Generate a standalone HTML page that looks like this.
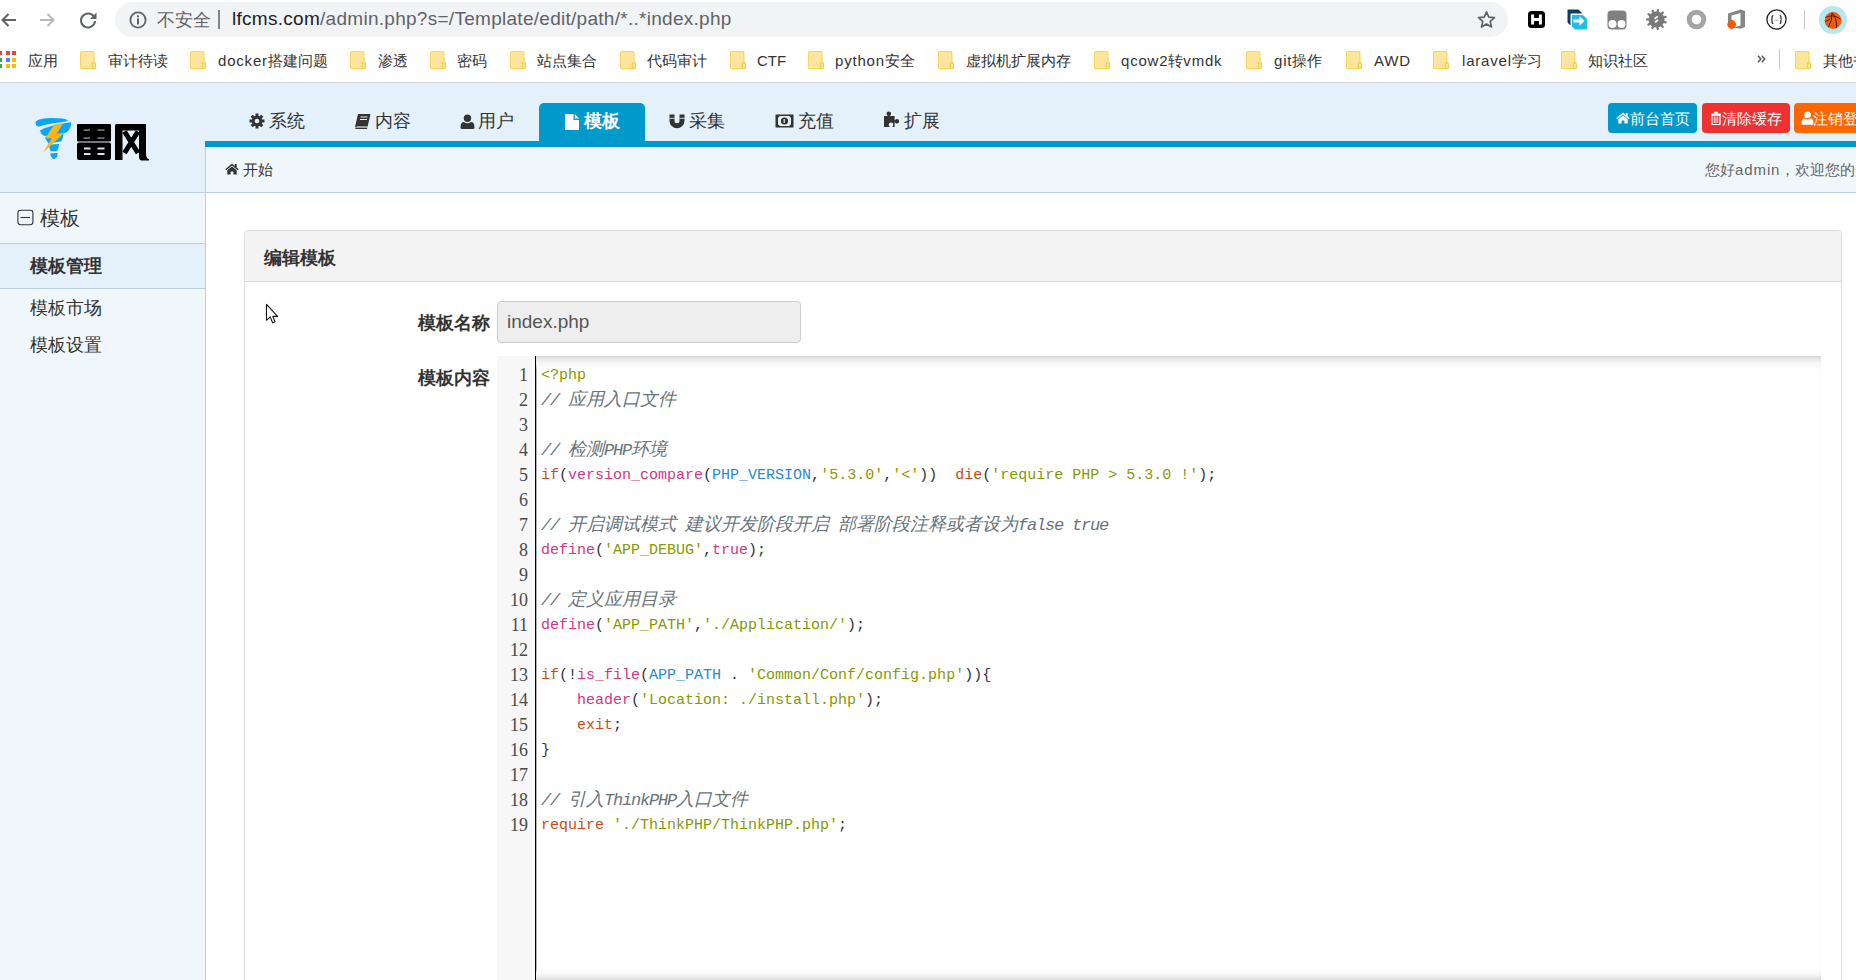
<!DOCTYPE html>
<html><head><meta charset="utf-8">
<style>
*{box-sizing:border-box;margin:0;padding:0}
html,body{width:1856px;height:980px;overflow:hidden;background:#fff;font-family:"Liberation Sans",sans-serif;color:#333}
div,span{position:absolute}
.t{white-space:nowrap}
#omni{left:115px;top:2px;width:1393px;height:35px;border-radius:17.5px;background:#f1f3f4}
#bmline{left:0;top:82px;width:1856px;height:1px;background:#d4d6d9}
.la{position:static;letter-spacing:.8px}
.bmi{top:53px;font-size:15px;color:#333;white-space:nowrap;line-height:16px}
.fold{top:51px;width:15px;height:19px;background:#fde293;border:1px solid #f6d061;border-radius:2px}
#logo{left:0;top:83px;width:205px;height:110px;background:#e4f0fa}
#hdr{left:205px;top:83px;width:1651px;height:58px;background:#e4f0fa}
#blue{left:205px;top:141px;width:1651px;height:6px;background:#0099cc}
#crumb{left:205px;top:147px;width:1651px;height:46px;background:#f0f7fb;border-bottom:1px solid #b9d0dd;border-left:1px solid #b9d0dd}
#logoline{left:0;top:192px;width:205px;height:1px;background:#b9d0dd}
.nav{top:103px;height:38px;font-size:18px;line-height:38px;color:#333;white-space:nowrap}
.navt{position:absolute;top:111px;font-size:18px;line-height:20px;color:#333;white-space:nowrap}
.btnt{position:absolute;top:110px;font-size:15px;line-height:17px;color:#fff;white-space:nowrap}
.act{background:#0099cc;color:#fff;font-weight:bold;border-radius:5px 5px 0 0}
.btn{top:103px;height:30px;line-height:30px;border-radius:4px;color:#fff;font-size:15px;white-space:nowrap}
#side{left:0;top:193px;width:206px;height:787px;background:#f0f7fb;border-right:1px solid #b9d0dd}
#panel{left:244px;top:230px;width:1598px;height:800px;border:1px solid #ddd;border-radius:4px;background:#fff}
#phead{left:0;top:0;width:1596px;height:51px;background:#f4f4f4;border-bottom:1px solid #ddd;border-radius:4px 4px 0 0}
.lbl{font-size:18px;font-weight:bold;color:#333;white-space:nowrap}
#inp{left:497px;top:301px;width:304px;height:42px;background:#eee;border:1px solid #ccc;border-radius:4px;font-size:19px;color:#555;padding-left:9px;line-height:40px}
#ed{left:497px;top:356px;width:1324px;height:624px;background:#fff;overflow:hidden}
#gut{left:0;top:0;width:37px;height:624px;background:#f7f7f7}
#cur{left:38px;top:0;width:1px;height:624px;background:#000;box-shadow:1px 0 0 rgba(0,0,0,.3)}
#shadowt{left:39px;top:0;width:1285px;height:14px;background:linear-gradient(#d6d6d6 0,#e9e9e9 3px,#f6f6f6 7px,rgba(255,255,255,0) 14px)}
#shadowr{left:1322px;top:0;width:2px;height:624px;background:linear-gradient(90deg,rgba(0,0,0,0),rgba(0,0,0,.025))}
#shadowb{left:39px;top:612px;width:1285px;height:12px;background:linear-gradient(rgba(255,255,255,0) 0,#f7f7f7 6px,#ececec 9px,#dedede 12px)}
.ln{left:0;width:31px;text-align:right;font-family:"Liberation Serif",serif;font-size:18px;color:#4a4a4a;line-height:25px}
.code{left:44px;font-family:"Liberation Mono",monospace;font-size:15px;white-space:pre;color:#333;line-height:25px}
.code i{font-style:normal}.code b{font-weight:normal}
.code i.cm{color:#687378;font-style:italic}
.k{color:#cb4b16}
.f{color:#d33682}
.s{color:#859900}
.c{color:#268bd2}
.p{color:#333}
.ca{font-size:17px;letter-spacing:-1.2px}
.cj{font-size:18px;font-weight:300 !important}
</style></head><body>
<!-- chrome toolbar -->
<svg style="position:absolute;left:0;top:11px" width="18" height="18" viewBox="0 0 18 18"><path d="M16 9H2.5M8.5 3L2.5 9l6 6" fill="none" stroke="#5f6368" stroke-width="2"/></svg>
<svg style="position:absolute;left:39px;top:11px" width="18" height="18" viewBox="0 0 18 18"><path d="M1 9h13.5M8.5 3l6 6-6 6" fill="none" stroke="#b5b8bb" stroke-width="2"/></svg>
<svg style="position:absolute;left:79px;top:11px" width="19" height="19" viewBox="0 0 19 19"><path d="M15.2 6.2A7 7 0 1 0 16 10" fill="none" stroke="#5f6368" stroke-width="2"/><path d="M17.5 1.5v6.5h-6.5z" fill="#5f6368"/></svg>
<div id="omni"></div>
<svg style="position:absolute;left:129px;top:11px" width="18" height="18" viewBox="0 0 18 18"><circle cx="9" cy="9" r="7.6" fill="none" stroke="#5f6368" stroke-width="1.8"/><rect x="8" y="7.5" width="2" height="6" fill="#5f6368"/><rect x="8" y="4.3" width="2" height="2" fill="#5f6368"/></svg>
<svg style="position:absolute;left:1477px;top:10px" width="19" height="19" viewBox="0 0 19 19"><path d="M9.5 1.8l2.3 5.3 5.7.5-4.3 3.8 1.3 5.6-5-3-5 3 1.3-5.6-4.3-3.8 5.7-.5z" fill="none" stroke="#5f6368" stroke-width="1.7" stroke-linejoin="round"/></svg>
<svg style="position:absolute;left:1527px;top:10px" width="19" height="19" viewBox="0 0 19 19"><rect x="1" y="1" width="17" height="17" rx="3.5" fill="#000"/><path d="M5.6 4.5v10M13.4 4.5v10M5.6 9.5h7.8" stroke="#fff" stroke-width="3"/></svg>
<svg style="position:absolute;left:1567px;top:9px" width="21" height="21" viewBox="0 0 21 21"><path d="M0.5 0.5h11l4 4H3.5v12l-3-3z" fill="#0e3a66"/><path d="M5 6h11l4 4v10.5H8l-3-3z" fill="#1ec0e4"/><path d="M6.5 10.5h6v-3.2l5 4.7-5 4.7v-3.2h-6z" fill="#fff"/></svg>
<svg style="position:absolute;left:1607px;top:10px" width="20" height="20" viewBox="0 0 20 20"><rect x="0.5" y="0.5" width="19" height="19" rx="4" fill="#808080"/><circle cx="5.5" cy="14" r="4" fill="#fff"/><circle cx="14.5" cy="14" r="4" fill="#fff"/></svg>
<svg style="position:absolute;left:1646px;top:9px" width="21" height="21" viewBox="0 0 20 20"><circle cx="10" cy="10" r="7.6" fill="#7a7a7a"/><path d="M16.2 11.9L18.6 12.7M14.2 15.0L15.8 16.9M10.8 16.4L11.2 18.9M7.2 15.9L6.1 18.1M4.5 13.4L2.4 14.8M3.5 9.9L1.0 9.9M4.6 6.4L2.5 5.0M7.4 4.0L6.4 1.8M11.0 3.6L11.4 1.1M14.3 5.1L16.0 3.3M16.3 8.3L18.7 7.6" stroke="#7a7a7a" stroke-width="2.2" stroke-linecap="round"/><path d="M8.2 9.3l3-2.3M8.6 12.6l3-2.3" stroke="#fff" stroke-width="1.6"/></svg>
<svg style="position:absolute;left:1686px;top:9px" width="21" height="21" viewBox="0 0 21 21"><circle cx="10.5" cy="10.5" r="7.3" fill="none" stroke="#a5a5a5" stroke-width="5"/></svg>
<svg style="position:absolute;left:1725px;top:8px" width="22" height="22" viewBox="0 0 22 22"><path d="M3 5.5L15.5 1.5 20 3v16l-4.5 1.8L8.5 19.5 15.5 17.5V5L6.5 7.5v8H3z" fill="#858585"/><circle cx="6.7" cy="16.5" r="4.4" fill="#f25a0a"/></svg>
<svg style="position:absolute;left:1766px;top:9px" width="21" height="21" viewBox="0 0 21 21"><circle cx="10.5" cy="10.5" r="9.6" fill="none" stroke="#222" stroke-width="1.3"/><path d="M7.3 6.5q-1.2 0-1.2 1.3v1.5q0 1.2-.9 1.2.9 0 .9 1.2v1.5q0 1.3 1.2 1.3M13.7 6.5q1.2 0 1.2 1.3v1.5q0 1.2.9 1.2-.9 0-.9 1.2v1.5q0 1.3-1.2 1.3" fill="none" stroke="#222" stroke-width="1.2"/><path d="M8.6 11.2h.8M10.1 11.2h.8M11.6 11.2h.8" stroke="#666" stroke-width="0.9"/></svg>
<div style="left:1804px;top:10px;width:1px;height:19px;background:#c8c8c8"></div>
<svg style="position:absolute;left:1819px;top:6px" width="28" height="28" viewBox="0 0 28 28"><circle cx="14" cy="14" r="14" fill="#b6e8f0"/><circle cx="14" cy="14.5" r="8.4" fill="#f25c12"/><path d="M6.5 11.5q7-4 15 1.5M9.5 21q4-7 3.5-14.5M13 7q5 4 4.5 15M6.3 15.5q3-1 5-3" fill="none" stroke="#3a1808" stroke-width="0.9"/></svg>
<div class="t" style="left:157px;top:10px;font-size:18px;color:#5f6368;line-height:20px">不安全</div>
<div style="left:218px;top:10px;width:2px;height:19px;background:#80868b"></div>
<div class="t" style="left:232px;top:9px;font-size:19px;letter-spacing:0.28px;color:#202124;line-height:20px">lfcms.com<span style="position:static;color:#5f6368">/admin.php?s=/Template/edit/path/*..*index.php</span></div>

<div id="bmline"></div>
<svg style="position:absolute;left:-2px;top:51px" width="20" height="18" viewBox="0 0 20 18"><g><rect x="0" y="0" width="4" height="4" fill="#ea4335"/><rect x="8" y="0" width="4" height="4" fill="#ea4335"/><rect x="14" y="0" width="4" height="4" fill="#ea4335"/><rect x="0" y="7" width="4" height="4" fill="#34a853"/><rect x="8" y="7" width="4" height="4" fill="#4285f4"/><rect x="14" y="7" width="4" height="4" fill="#fbbc05"/><rect x="0" y="13" width="4" height="4" fill="#34a853"/><rect x="8" y="13" width="4" height="4" fill="#fbbc05"/><rect x="14" y="13" width="4" height="4" fill="#fbbc05"/></g></svg>
<div class="bmi" style="left:28px">应用</div>
<svg style="position:absolute;left:80px;top:51px" width="17" height="19" viewBox="0 0 17 19"><rect x="0.6" y="0.6" width="13.3" height="17" rx="1.3" fill="#fde59c" stroke="#f8d558" stroke-width="1.2"/><rect x="2" y="2" width="10.5" height="14.2" fill="none" stroke="#fdea9f" stroke-width="1"/><rect x="12.3" y="11.6" width="3.1" height="6" rx="1.2" fill="#fde59c" stroke="#efcb4a" stroke-width="1.1"/></svg>
<div class="bmi" style="left:108px">审计待读</div>
<svg style="position:absolute;left:190px;top:51px" width="17" height="19" viewBox="0 0 17 19"><rect x="0.6" y="0.6" width="13.3" height="17" rx="1.3" fill="#fde59c" stroke="#f8d558" stroke-width="1.2"/><rect x="2" y="2" width="10.5" height="14.2" fill="none" stroke="#fdea9f" stroke-width="1"/><rect x="12.3" y="11.6" width="3.1" height="6" rx="1.2" fill="#fde59c" stroke="#efcb4a" stroke-width="1.1"/></svg>
<div class="bmi" style="left:218px"><span class="la">docker</span>搭建问题</div>
<svg style="position:absolute;left:350px;top:51px" width="17" height="19" viewBox="0 0 17 19"><rect x="0.6" y="0.6" width="13.3" height="17" rx="1.3" fill="#fde59c" stroke="#f8d558" stroke-width="1.2"/><rect x="2" y="2" width="10.5" height="14.2" fill="none" stroke="#fdea9f" stroke-width="1"/><rect x="12.3" y="11.6" width="3.1" height="6" rx="1.2" fill="#fde59c" stroke="#efcb4a" stroke-width="1.1"/></svg>
<div class="bmi" style="left:378px">渗透</div>
<svg style="position:absolute;left:430px;top:51px" width="17" height="19" viewBox="0 0 17 19"><rect x="0.6" y="0.6" width="13.3" height="17" rx="1.3" fill="#fde59c" stroke="#f8d558" stroke-width="1.2"/><rect x="2" y="2" width="10.5" height="14.2" fill="none" stroke="#fdea9f" stroke-width="1"/><rect x="12.3" y="11.6" width="3.1" height="6" rx="1.2" fill="#fde59c" stroke="#efcb4a" stroke-width="1.1"/></svg>
<div class="bmi" style="left:457px">密码</div>
<svg style="position:absolute;left:510px;top:51px" width="17" height="19" viewBox="0 0 17 19"><rect x="0.6" y="0.6" width="13.3" height="17" rx="1.3" fill="#fde59c" stroke="#f8d558" stroke-width="1.2"/><rect x="2" y="2" width="10.5" height="14.2" fill="none" stroke="#fdea9f" stroke-width="1"/><rect x="12.3" y="11.6" width="3.1" height="6" rx="1.2" fill="#fde59c" stroke="#efcb4a" stroke-width="1.1"/></svg>
<div class="bmi" style="left:537px">站点集合</div>
<svg style="position:absolute;left:620px;top:51px" width="17" height="19" viewBox="0 0 17 19"><rect x="0.6" y="0.6" width="13.3" height="17" rx="1.3" fill="#fde59c" stroke="#f8d558" stroke-width="1.2"/><rect x="2" y="2" width="10.5" height="14.2" fill="none" stroke="#fdea9f" stroke-width="1"/><rect x="12.3" y="11.6" width="3.1" height="6" rx="1.2" fill="#fde59c" stroke="#efcb4a" stroke-width="1.1"/></svg>
<div class="bmi" style="left:647px">代码审计</div>
<svg style="position:absolute;left:730px;top:51px" width="17" height="19" viewBox="0 0 17 19"><rect x="0.6" y="0.6" width="13.3" height="17" rx="1.3" fill="#fde59c" stroke="#f8d558" stroke-width="1.2"/><rect x="2" y="2" width="10.5" height="14.2" fill="none" stroke="#fdea9f" stroke-width="1"/><rect x="12.3" y="11.6" width="3.1" height="6" rx="1.2" fill="#fde59c" stroke="#efcb4a" stroke-width="1.1"/></svg>
<div class="bmi" style="left:757px">CTF</div>
<svg style="position:absolute;left:808px;top:51px" width="17" height="19" viewBox="0 0 17 19"><rect x="0.6" y="0.6" width="13.3" height="17" rx="1.3" fill="#fde59c" stroke="#f8d558" stroke-width="1.2"/><rect x="2" y="2" width="10.5" height="14.2" fill="none" stroke="#fdea9f" stroke-width="1"/><rect x="12.3" y="11.6" width="3.1" height="6" rx="1.2" fill="#fde59c" stroke="#efcb4a" stroke-width="1.1"/></svg>
<div class="bmi" style="left:835px"><span class="la">python</span>安全</div>
<svg style="position:absolute;left:938px;top:51px" width="17" height="19" viewBox="0 0 17 19"><rect x="0.6" y="0.6" width="13.3" height="17" rx="1.3" fill="#fde59c" stroke="#f8d558" stroke-width="1.2"/><rect x="2" y="2" width="10.5" height="14.2" fill="none" stroke="#fdea9f" stroke-width="1"/><rect x="12.3" y="11.6" width="3.1" height="6" rx="1.2" fill="#fde59c" stroke="#efcb4a" stroke-width="1.1"/></svg>
<div class="bmi" style="left:966px">虚拟机扩展内存</div>
<svg style="position:absolute;left:1094px;top:51px" width="17" height="19" viewBox="0 0 17 19"><rect x="0.6" y="0.6" width="13.3" height="17" rx="1.3" fill="#fde59c" stroke="#f8d558" stroke-width="1.2"/><rect x="2" y="2" width="10.5" height="14.2" fill="none" stroke="#fdea9f" stroke-width="1"/><rect x="12.3" y="11.6" width="3.1" height="6" rx="1.2" fill="#fde59c" stroke="#efcb4a" stroke-width="1.1"/></svg>
<div class="bmi" style="left:1121px"><span class="la">qcow2</span>转<span class="la">vmdk</span></div>
<svg style="position:absolute;left:1246px;top:51px" width="17" height="19" viewBox="0 0 17 19"><rect x="0.6" y="0.6" width="13.3" height="17" rx="1.3" fill="#fde59c" stroke="#f8d558" stroke-width="1.2"/><rect x="2" y="2" width="10.5" height="14.2" fill="none" stroke="#fdea9f" stroke-width="1"/><rect x="12.3" y="11.6" width="3.1" height="6" rx="1.2" fill="#fde59c" stroke="#efcb4a" stroke-width="1.1"/></svg>
<div class="bmi" style="left:1274px"><span class="la">git</span>操作</div>
<svg style="position:absolute;left:1346px;top:51px" width="17" height="19" viewBox="0 0 17 19"><rect x="0.6" y="0.6" width="13.3" height="17" rx="1.3" fill="#fde59c" stroke="#f8d558" stroke-width="1.2"/><rect x="2" y="2" width="10.5" height="14.2" fill="none" stroke="#fdea9f" stroke-width="1"/><rect x="12.3" y="11.6" width="3.1" height="6" rx="1.2" fill="#fde59c" stroke="#efcb4a" stroke-width="1.1"/></svg>
<div class="bmi" style="left:1374px"><span class="la">AWD</span></div>
<svg style="position:absolute;left:1433px;top:51px" width="17" height="19" viewBox="0 0 17 19"><rect x="0.6" y="0.6" width="13.3" height="17" rx="1.3" fill="#fde59c" stroke="#f8d558" stroke-width="1.2"/><rect x="2" y="2" width="10.5" height="14.2" fill="none" stroke="#fdea9f" stroke-width="1"/><rect x="12.3" y="11.6" width="3.1" height="6" rx="1.2" fill="#fde59c" stroke="#efcb4a" stroke-width="1.1"/></svg>
<div class="bmi" style="left:1462px"><span class="la">laravel</span>学习</div>
<svg style="position:absolute;left:1561px;top:51px" width="17" height="19" viewBox="0 0 17 19"><rect x="0.6" y="0.6" width="13.3" height="17" rx="1.3" fill="#fde59c" stroke="#f8d558" stroke-width="1.2"/><rect x="2" y="2" width="10.5" height="14.2" fill="none" stroke="#fdea9f" stroke-width="1"/><rect x="12.3" y="11.6" width="3.1" height="6" rx="1.2" fill="#fde59c" stroke="#efcb4a" stroke-width="1.1"/></svg>
<div class="bmi" style="left:1588px">知识社区</div>
<svg style="position:absolute;left:1795px;top:51px" width="17" height="19" viewBox="0 0 17 19"><rect x="0.6" y="0.6" width="13.3" height="17" rx="1.3" fill="#fde59c" stroke="#f8d558" stroke-width="1.2"/><rect x="2" y="2" width="10.5" height="14.2" fill="none" stroke="#fdea9f" stroke-width="1"/><rect x="12.3" y="11.6" width="3.1" height="6" rx="1.2" fill="#fde59c" stroke="#efcb4a" stroke-width="1.1"/></svg>
<div class="bmi" style="left:1823px">其他书签</div>
<svg style="position:absolute;left:1757px;top:55px" width="9" height="8" viewBox="0 0 9 8"><path d="M1 0.8l2.8 3.2L1 7.2M4.8 0.8l2.8 3.2-2.8 3.2" fill="none" stroke="#5a5e63" stroke-width="1.6"/></svg>
<div style="left:1779px;top:49px;width:1px;height:20px;background:#c8c8cc"></div>

<!-- page header -->
<div id="logo"></div>
<svg style="position:absolute;left:30px;top:112px" width="50" height="53" viewBox="0 0 50 53">
<g fill="#0ba7f7">
<path d="M5.5 11Q5.5 6.5 21 6Q35.5 6 37.8 8.3Q37 9.8 30 10.5Q17 12 8 14.8Q5.6 13.8 5.5 11Z"/>
<path d="M10 18.5Q19 13 40.8 10.3Q41.5 11 40.5 15Q39 19.5 35 21Q29 22 24 23L14.5 24Q11 22.5 10 18.5Z"/>
<path d="M15 25Q22 22.5 33.6 21.5Q33.5 26 31 29.5Q25 30.5 18.5 31.5Q16 28.5 15 25Z"/>
<path d="M19 33Q24 32 29 32Q29 36.5 27 39Q23 39.5 20.5 39Q19.3 36 19 33Z"/>
<path d="M20 41.5Q24 40.6 27.8 41Q27.8 45.5 24.5 47Q21.5 47.2 20 41.5Z"/>
</g>
<path d="M24.3 12.2H32.6L26.8 21.6H33.6L12.7 41L21.9 26.2H15.4Z" fill="#fcb314"/>
</svg>
<svg style="position:absolute;left:76px;top:123px" width="76" height="38" viewBox="0 0 76 38">
<g fill="#000">
<rect x="1" y="1" width="34" height="17.5" rx="1"/>
<rect x="1" y="19.5" width="34" height="17.5" rx="2"/>
<path d="M40 1h30v29q0 6 3 6v1.5H66q-3 0-3-4V7.5H46.5V37H39V4q0-3 1-3z"/>
<path d="M48.5 8.5L62 30M62 8.5L48.5 30" stroke="#000" stroke-width="5"/>
</g>
<g fill="#7a7a7a">
<rect x="7.5" y="6.3" width="6.5" height="1.6"/><rect x="21.5" y="6.3" width="7" height="1.6"/>
<rect x="7.5" y="14.3" width="6.5" height="1.6"/><rect x="21.5" y="14.3" width="7" height="1.6"/>
</g>
<g fill="#d8e4ee">
<rect x="8" y="24.5" width="6.5" height="2"/><rect x="21.5" y="24.5" width="7" height="2"/>
<rect x="8" y="30" width="6.5" height="2"/><rect x="21.5" y="30" width="7" height="2"/>
</g>
</svg>
<div id="logoline"></div>
<div id="hdr"></div>
<div class="nav act" style="left:539px;width:106px"></div>
<div class="navt" style="left:269px">系统</div>
<div class="navt" style="left:375px">内容</div>
<div class="navt" style="left:478px">用户</div>
<div class="navt" style="left:584px;color:#fff;font-weight:bold">模板</div>
<div class="navt" style="left:689px">采集</div>
<div class="navt" style="left:798px">充值</div>
<div class="navt" style="left:904px">扩展</div>
<svg style="position:absolute;left:249px;top:113px" width="16" height="16" viewBox="0 0 16 16"><g fill="#333"><circle cx="8" cy="8" r="5.2"/><g id="teeth"><rect x="6.5" y="0.5" width="3" height="3.5"/><rect x="6.5" y="12" width="3" height="3.5"/><rect x="0.5" y="6.5" width="3.5" height="3"/><rect x="12" y="6.5" width="3.5" height="3"/></g><g transform="rotate(45 8 8)"><rect x="6.5" y="0.5" width="3" height="3.5"/><rect x="6.5" y="12" width="3" height="3.5"/><rect x="0.5" y="6.5" width="3.5" height="3"/><rect x="12" y="6.5" width="3.5" height="3"/></g></g><circle cx="8" cy="8" r="2.3" fill="#e4f0fa"/></svg>
<svg style="position:absolute;left:354px;top:113px" width="17" height="17" viewBox="0 0 17 17"><path d="M4 1h12.5l-3 13H1z" fill="#333"/><path d="M1.3 14.5h12l-.3 1.5H1.5z" fill="#333"/><path d="M6.5 4h7M6 6.5h7" stroke="#e4f0fa" stroke-width="1.2"/><path d="M2.5 13.8h11" stroke="#e4f0fa" stroke-width="0.8"/></svg>
<svg style="position:absolute;left:460px;top:114px" width="15" height="15" viewBox="0 0 15 15"><circle cx="7.5" cy="4.2" r="3.7" fill="#333"/><path d="M0.5 13.5q0-5.5 3.5-5.5 3.5 2.5 7 0 3.5 0 3.5 5.5 0 1.5-1.5 1.5H2q-1.5 0-1.5-1.5z" fill="#333"/></svg>
<svg style="position:absolute;left:564px;top:113px" width="16" height="18" viewBox="0 0 16 18"><path d="M1 1h8.5v6H15v10H1z" fill="#fff"/><path d="M10.8 1L15 5.5h-4.2z" fill="#fff"/></svg>
<svg style="position:absolute;left:669px;top:113px" width="16" height="16" viewBox="0 0 16 16"><path d="M0.5 1.5h5v6.2a2.5 2.5 0 0 0 5 0V1.5h5v6.2a7.5 7.5 0 0 1-15 0z" fill="#333"/><path d="M0.5 5.3h5M10.5 5.3h5" stroke="#e4f0fa" stroke-width="0.9"/></svg>
<svg style="position:absolute;left:775px;top:114px" width="19" height="14" viewBox="0 0 19 14"><rect x="0.5" y="0.5" width="18" height="13" fill="#333"/><path d="M3 3.5q1.5 0 1.5-1.5h10q0 1.5 1.5 1.5v7q-1.5 0-1.5 1.5h-10q0-1.5-1.5-1.5z" fill="#e4f0fa"/><circle cx="9.5" cy="7" r="3.6" fill="#333"/><path d="M9.2 5v4" stroke="#e4f0fa" stroke-width="1.2"/></svg>
<svg style="position:absolute;left:883px;top:111px" width="18" height="17" viewBox="0 0 18 17"><path d="M1 5h4q-1.5-1-1.5-2.3a2.3 2.3 0 0 1 4.6 0q0 1.3-1.5 2.3h5v4.5q1-1.5 2.3-1.5a2.3 2.3 0 0 1 0 4.6q-1.3 0-2.3-1.5v4.9H9q1.3-1 1.3-2.2a2.3 2.3 0 0 0-4.6 0q0 1.2 1.3 2.2H1z" fill="#333"/></svg>
<div class="btn" style="left:1608px;width:89px;background:#0099cc"></div>
<div class="btn" style="left:1702px;width:88px;background:#ee3131"></div>
<div class="btn" style="left:1794px;width:80px;background:#ff6600"></div>
<div class="btnt" style="left:1630px">前台首页</div>
<div class="btnt" style="left:1722px">清除缓存</div>
<div class="btnt" style="left:1813px">注销登录</div>
<svg style="position:absolute;left:1616px;top:112px" width="14" height="12" viewBox="0 0 14 12"><path d="M7 0.5L0.3 6.2l1 1.1L7 2.6l5.7 4.7 1-1.1z" fill="#fff"/><path d="M2.3 7.2L7 3.4l4.7 3.8v4.3H8.4V8.4H5.6v3.1H2.3z" fill="#fff"/><rect x="9.8" y="1" width="1.9" height="3.2" fill="#fff"/></svg>
<svg style="position:absolute;left:1710px;top:111px" width="12" height="14" viewBox="0 0 12 14"><path d="M4 1.5h4M1 3.2h10" stroke="#fff" stroke-width="1.4"/><path d="M2 4.2h8v8.5a1 1 0 0 1-1 1H3a1 1 0 0 1-1-1z" fill="none" stroke="#fff" stroke-width="1.3"/><path d="M4.3 5.5v6.5M6 5.5v6.5M7.7 5.5v6.5" stroke="#fff" stroke-width="0.9"/></svg>
<svg style="position:absolute;left:1801px;top:111px" width="13" height="14" viewBox="0 0 13 14"><circle cx="6.5" cy="3.8" r="3.4" fill="#fff"/><path d="M0.5 12.5q0-5 3-5 3 2 6 0 3 0 3 5 0 1.3-1.3 1.3H1.8q-1.3 0-1.3-1.3z" fill="#fff"/></svg>
<div id="blue"></div>
<div id="crumb"></div>
<svg style="position:absolute;left:225px;top:163px" width="14" height="12" viewBox="0 0 14 12"><path d="M7 0.5L0.3 6.2l1 1.1L7 2.6l5.7 4.7 1-1.1z" fill="#333"/><path d="M2.3 7.2L7 3.4l4.7 3.8v4.3H8.4V8.4H5.6v3.1H2.3z" fill="#333"/><rect x="9.8" y="1" width="1.9" height="3.2" fill="#333"/></svg>
<div class="t" style="left:243px;top:161px;font-size:15px;line-height:17px;color:#333">开始</div>
<div class="t" style="left:1705px;top:161px;font-size:15px;line-height:17px;color:#666">您好<span class="la" style="letter-spacing:.9px">admin</span>，欢迎您的光临</div>

<!-- sidebar -->
<div id="side"></div>
<div style="left:0;top:243px;width:205px;height:1px;background:#b9d0dd"></div>
<div style="left:0;top:244px;width:205px;height:45px;background:#e4f0fa;border-bottom:1px solid #b9d0dd"></div>
<svg style="position:absolute;left:17px;top:209px" width="17" height="17" viewBox="0 0 17 17"><rect x="0.9" y="1.2" width="15" height="14.5" rx="2.6" fill="none" stroke="#333" stroke-width="1.1"/><path d="M3.5 8.5h9.5" stroke="#333" stroke-width="1.1"/></svg>
<div class="t" style="left:40px;top:206px;font-size:20px;line-height:24px;color:#333">模板</div>
<div class="t" style="left:30px;top:254px;font-size:18px;font-weight:bold;color:#333">模板管理</div>
<div class="t" style="left:30px;top:296px;font-size:18px;color:#333">模板市场</div>
<div class="t" style="left:30px;top:333px;font-size:18px;color:#333">模板设置</div>

<!-- panel -->
<div id="panel"><div id="phead"></div></div>
<div class="lbl" style="left:264px;top:246px">编辑模板</div>
<div class="lbl" style="left:418px;top:311px">模板名称</div>
<div id="inp" class="t">index.php</div>
<div class="lbl" style="left:418px;top:366px">模板内容</div>

<svg style="position:absolute;left:265px;top:303px" width="15" height="22" viewBox="0 0 15 22"><path d="M1.5 1.3V17.3L5.2 13.9 7.6 19.7 10 18.7 7.8 13.4H12.6Z" fill="#fff" stroke="#111" stroke-width="1.1" stroke-linejoin="round"/></svg>
<div id="ed">
  <div id="gut"></div>
  <div id="cur"></div>
  <div id="shadowt"></div>
  <div id="shadowb"></div>
<div id="shadowr"></div>
<div class="ln" style="top:7px">1</div>
<div class="code" style="top:7px"><i class="s">&lt;?php</i></div>
<div class="ln" style="top:32px">2</div>
<div class="code" style="top:32px"><i class="cm"><b class="ca">//</b> <b class="cj">应用入口文件</b></i></div>
<div class="ln" style="top:57px">3</div>
<div class="code" style="top:57px"></div>
<div class="ln" style="top:82px">4</div>
<div class="code" style="top:82px"><i class="cm"><b class="ca">//</b> <b class="cj">检测</b><b class="ca">PHP</b><b class="cj">环境</b></i></div>
<div class="ln" style="top:107px">5</div>
<div class="code" style="top:107px"><i class="k">if</i><i class="p">(</i><i class="f">version_compare</i><i class="p">(</i><i class="c">PHP_VERSION</i><i class="p">,</i><i class="s">'5.3.0'</i><i class="p">,</i><i class="s">'&lt;'</i><i class="p">))  </i><i class="k">die</i><i class="p">(</i><i class="s">'require PHP &gt; 5.3.0 !'</i><i class="p">);</i></div>
<div class="ln" style="top:132px">6</div>
<div class="code" style="top:132px"></div>
<div class="ln" style="top:157px">7</div>
<div class="code" style="top:157px"><i class="cm"><b class="ca">//</b> <b class="cj">开启调试模式</b> <b class="cj">建议开发阶段开启</b> <b class="cj">部署阶段注释或者设为</b><b class="ca">false</b> <b class="ca">true</b></i></div>
<div class="ln" style="top:182px">8</div>
<div class="code" style="top:182px"><i class="f">define</i><i class="p">(</i><i class="s">'APP_DEBUG'</i><i class="p">,</i><i class="f">true</i><i class="p">);</i></div>
<div class="ln" style="top:207px">9</div>
<div class="code" style="top:207px"></div>
<div class="ln" style="top:232px">10</div>
<div class="code" style="top:232px"><i class="cm"><b class="ca">//</b> <b class="cj">定义应用目录</b></i></div>
<div class="ln" style="top:257px">11</div>
<div class="code" style="top:257px"><i class="f">define</i><i class="p">(</i><i class="s">'APP_PATH'</i><i class="p">,</i><i class="s">'./Application/'</i><i class="p">);</i></div>
<div class="ln" style="top:282px">12</div>
<div class="code" style="top:282px"></div>
<div class="ln" style="top:307px">13</div>
<div class="code" style="top:307px"><i class="k">if</i><i class="p">(!</i><i class="f">is_file</i><i class="p">(</i><i class="c">APP_PATH</i><i class="p"> . </i><i class="s">'Common/Conf/config.php'</i><i class="p">))</i><i class="p">{</i></div>
<div class="ln" style="top:332px">14</div>
<div class="code" style="top:332px"><i class="p">    </i><i class="f">header</i><i class="p">(</i><i class="s">'Location: ./install.php'</i><i class="p">);</i></div>
<div class="ln" style="top:357px">15</div>
<div class="code" style="top:357px"><i class="p">    </i><i class="k">exit</i><i class="p">;</i></div>
<div class="ln" style="top:382px">16</div>
<div class="code" style="top:382px"><i class="p">}</i></div>
<div class="ln" style="top:407px">17</div>
<div class="code" style="top:407px"></div>
<div class="ln" style="top:432px">18</div>
<div class="code" style="top:432px"><i class="cm"><b class="ca">//</b> <b class="cj">引入</b><b class="ca">ThinkPHP</b><b class="cj">入口文件</b></i></div>
<div class="ln" style="top:457px">19</div>
<div class="code" style="top:457px"><i class="k">require</i><i class="p"> </i><i class="s">'./ThinkPHP/ThinkPHP.php'</i><i class="p">;</i></div>
</div>
</body></html>
